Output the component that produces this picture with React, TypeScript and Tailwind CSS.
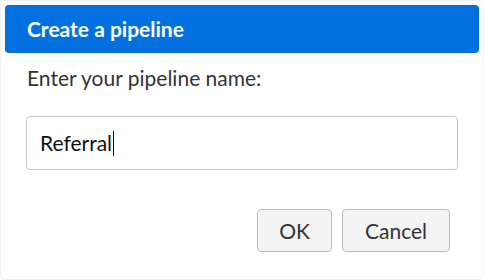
export default function App() {
  return (
    <div className="w-[484px] h-[280px] bg-white font-['Lato',sans-serif]">
      <div className="h-full rounded-md border border-[#f0f0f0] bg-white p-1">
        <div className="flex h-12 items-center rounded bg-[#0271df] px-[22px]">
          <h1 className="text-[21px] font-bold text-white">Create a pipeline</h1>
        </div>
        <p className="mt-[10px] px-[22px] text-[21px] leading-[30px] text-[#333]">Enter your pipeline name:</p>
        <div className="mt-[23px] pl-[21px] pr-[21px]">
          <div className="flex h-[54px] items-center rounded border border-[#c8c8c8] bg-white px-[13px] text-[21px] text-[#111]">
            Referral
            <span className="ml-px inline-block h-[25px] w-px bg-[#111]" />
          </div>
        </div>
        <div className="mt-[39px] flex justify-end gap-[10px] pr-[29px]">
          <button className="h-[43px] w-[75px] rounded border border-[#bdbdbd] bg-[#f4f4f4] text-[21px] text-[#333]">
            OK
          </button>
          <button className="h-[43px] w-[108px] rounded border border-[#bdbdbd] bg-[#f4f4f4] text-[21px] text-[#333]">
            Cancel
          </button>
        </div>
      </div>
    </div>
  );
}
